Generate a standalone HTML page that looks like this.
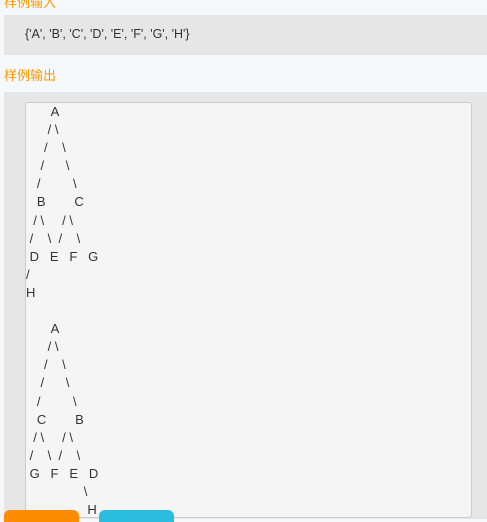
<!DOCTYPE html>
<html><head><meta charset="utf-8"><style>
html,body{margin:0;padding:0;width:487px;height:519px;overflow:hidden;background:#f5f9fc;font-family:"Liberation Sans","Noto Sans CJK SC",sans-serif;}
.t{position:absolute;left:4px;color:#f90;font-size:13px;}
.in{position:absolute;left:4px;top:15px;width:483px;height:40px;background:#e6e6e6;}
.in span{position:absolute;left:21px;top:12px;font-size:12.5px;color:#333;}
.outw{position:absolute;left:4px;top:92px;width:483px;height:427px;background:#e6e6e6;}
.box{position:absolute;left:25px;top:102px;width:445px;height:414px;background:#f5f5f5;border:1px solid #ccc;border-radius:3px;}
pre{position:absolute;left:26px;top:103px;margin:0;font-family:"Liberation Sans",sans-serif;font-size:13px;line-height:18.1px;color:#333;}
.b1{position:absolute;left:4px;top:510px;width:75px;height:12px;background:#ff8c00;border-radius:6px 6px 0 0;}
.b2{position:absolute;left:99px;top:510px;width:75px;height:12px;background:#2bbde0;border-radius:6px 6px 0 0;}
</style></head><body>
<div class="t" style="top:-8px">样例输入</div>
<div class="in"><span>{'A', 'B', 'C', 'D', 'E', 'F', 'G', 'H'}</span></div>
<div class="t" style="top:65px">样例输出</div>
<div class="outw"></div>
<div class="box"></div>
<pre>
       A
      / \
     /    \
    /      \
   /         \
   B        C
  / \     / \
 /    \  /    \
 D   E   F   G
/
H

       A
      / \
     /    \
    /      \
   /         \
   C        B
  / \     / \
 /    \  /    \
 G   F   E   D
                \
                 H</pre>
<div class="b1"></div><div class="b2"></div>
</body></html>
